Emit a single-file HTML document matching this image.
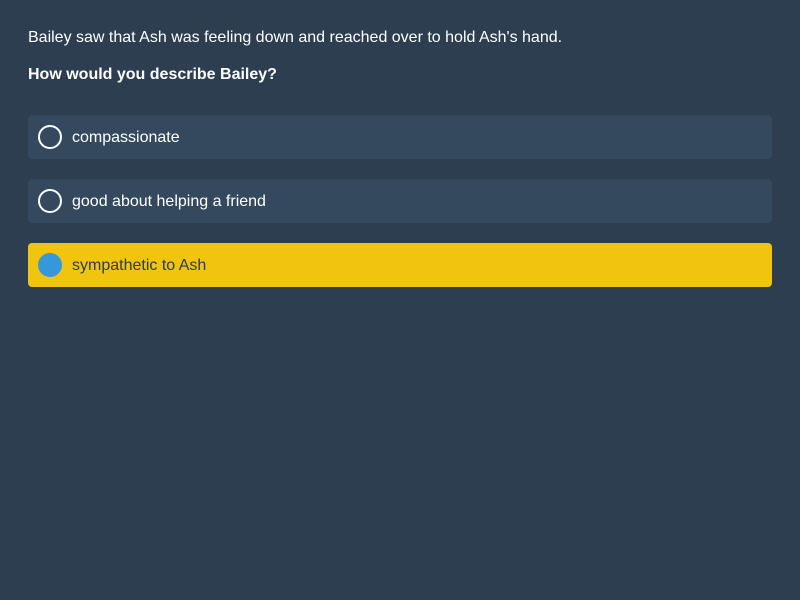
<!DOCTYPE html>
<html><head><style>
body{margin:0;width:800px;height:600px;background:#2c3e50;font-family:"Liberation Sans",sans-serif;color:#fff;overflow:hidden}
.p{position:absolute;left:28px;font-size:16px}
.o{position:absolute;left:28px;width:744px;height:44px;background:#34495e;border-radius:4px;font-size:16px}
.o .c{position:absolute;left:10px;top:10px;width:20px;height:20px;border:2px solid #fff;border-radius:50%}
.o span{position:absolute;left:44px;top:14px}
.o.s{background:#f1c40f;color:#2c3e50}
.o.s .c{background:#3498db;border-color:#3498db}
</style></head><body>
<div class="p" style="top:29px">Bailey saw that Ash was feeling down and reached over to hold Ash's hand.</div>
<div class="p" style="top:66px;font-weight:bold">How would you describe Bailey?</div>
<div class="o" style="top:115px"><div class="c"></div><span>compassionate</span></div>
<div class="o" style="top:179px"><div class="c"></div><span>good about helping a friend</span></div>
<div class="o s" style="top:243px"><div class="c"></div><span>sympathetic to Ash</span></div>
</body></html>
